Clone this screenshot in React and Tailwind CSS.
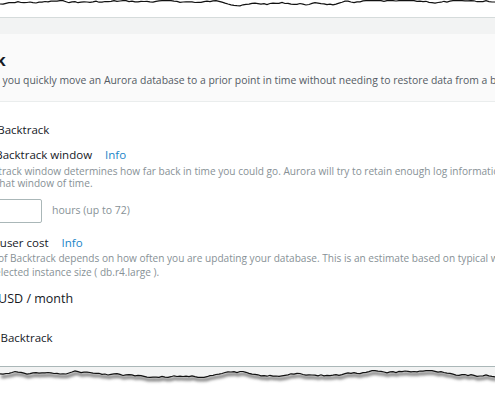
import React from "react";

// jagged torn-paper line, deterministic
function tornPoints(seed, width, base, amp) {
  let s = seed;
  const rnd = () => {
    s = (s * 9301 + 49297) % 233280;
    return s / 233280;
  };
  const pts = [];
  let y = base;
  for (let x = 0; x <= width + 3; x += 3) {
    y += (rnd() - 0.5) * amp;
    y = Math.max(base - amp * 1.5, Math.min(base + amp * 1.5, y));
    pts.push([x, +y.toFixed(1)]);
  }
  return pts;
}

function TopTear() {
  const pts = tornPoints(7, 495, 4, 2.2);
  const d = pts.map((p, i) => (i ? "L" : "M") + p[0] + " " + p[1]).join(" ");
  return (
    <svg width="495" height="17" className="block shrink-0">
      <rect width="495" height="17" fill="#ffffff" />
      <path d={d} stroke="#111" strokeWidth="1.2" fill="none" />
    </svg>
  );
}

function BottomTear() {
  const pts = tornPoints(31, 495, 7, 2.2);
  const line = pts.map((p, i) => (i ? "L" : "M") + p[0] + " " + p[1]).join(" ");
  const fill = "M0 0 " + pts.map((p) => "L" + p[0] + " " + p[1]).join(" ") + " L498 0 Z";
  return (
    <svg width="495" height="35" className="block shrink-0">
      <defs>
        <filter id="sh" x="-10%" y="-50%" width="120%" height="300%">
          <feGaussianBlur stdDeviation="1.6" />
        </filter>
      </defs>
      <rect width="495" height="35" fill="#ffffff" />
      <path d={line} transform="translate(1 2.5)" stroke="#777" strokeWidth="3" fill="none" filter="url(#sh)" />
      <path d={fill} fill="#f2f3f3" />
      <path d={line} stroke="#111" strokeWidth="1.2" fill="none" />
    </svg>
  );
}

function Info() {
  return <span className="ml-[13px] text-[#1a85c8] font-medium">Info</span>;
}

export default function App() {
  return (
    <div className="w-[495px] h-[400px] overflow-hidden bg-white flex flex-col font-['Open_Sans',sans-serif]">
      <TopTear />
      <div className="h-[17px] shrink-0 bg-[#f2f3f3] border-t border-[#d5dbdb]" />

      <div className="-ml-[64px] w-[680px] shrink-0">
        {/* panel header */}
        <div className="bg-[#fafafa] border-b border-[#eaeded] pt-[16px] pb-[14px]">
          <h2 className="-ml-[11px] text-[16px] leading-[20px] font-bold text-[#16191f]">Backtrack</h2>
          <p className="-ml-[3px] mt-[3px] text-[10.4px] leading-[14px] text-[#545b64] whitespace-nowrap">
            Backtrack lets you quickly move an Aurora database to a prior point in time without needing to restore data from a backup.
          </p>
        </div>

        {/* panel body */}
        <div className="pt-[20px] pb-[20px] border-b border-[#aab7b8]">
          <div className="flex items-center gap-[8px] text-[11.5px] leading-[16px] font-medium text-[#16191f]">
            <span className="w-[14px] h-[14px] border border-[#aab7b8] rounded-[2px]" />
            <span>Enable Backtrack</span>
          </div>

          <div className="ml-[22px]">
            <div className="mt-[9px] text-[11.5px] leading-[16px] font-medium text-[#16191f]">
              Target Backtrack window
              <Info />
            </div>
            <p className="-ml-[2px] mt-[2px] text-[10.1px] leading-[12px] text-[#879196] whitespace-nowrap">
              The Backtrack window determines how far back in time you could go. Aurora will try to retain enough log information to
              <br />
              support that window of time.
            </p>
            <div className="mt-[10px] flex items-center">
              <div className="w-[84px] h-[24px] border border-[#aab7b8] rounded-[2px] bg-white" />
              <span className="ml-[10px] text-[10.5px] text-[#879196]">hours (up to 72)</span>
            </div>

            <div className="ml-[2px] mt-[12px] text-[11.5px] leading-[16px] font-medium text-[#16191f]">
              Typical user cost
              <Info />
            </div>
            <p className="-ml-[2px] text-[10.1px] leading-[14px] text-[#879196] whitespace-nowrap">
              The cost of Backtrack depends on how often you are updating your database. This is an estimate based on typical workload
              <br />
              for the selected instance size ( db.r4.large ).
            </p>
            <div className="ml-[5px] mt-[11px] text-[12.5px] leading-[18px] text-[#16191f]">$1.44 USD / month</div>
          </div>

          <div className="mt-[22px] flex items-center gap-[8px] text-[11.5px] leading-[16px] font-medium text-[#16191f]">
            <span className="w-[14px] h-[14px] border border-[#aab7b8] rounded-full" />
            <span>Disable Backtrack</span>
          </div>
        </div>
      </div>

      <BottomTear />
    </div>
  );
}
